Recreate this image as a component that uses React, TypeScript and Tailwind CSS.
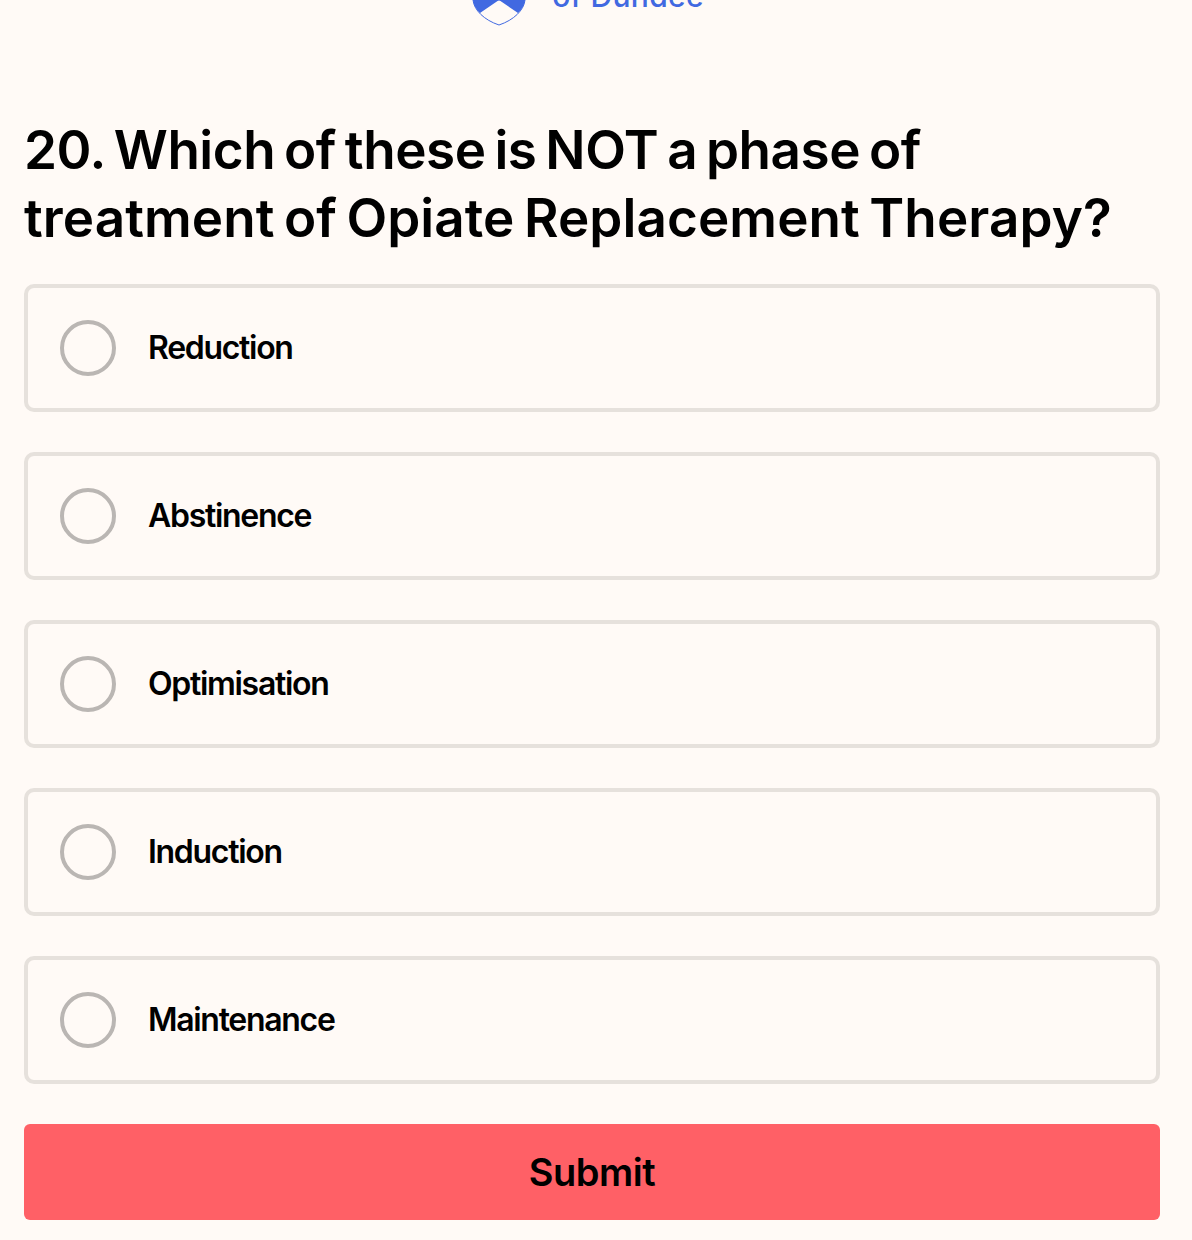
import React from "react";

const options = ["Reduction", "Abstinence", "Optimisation", "Induction", "Maintenance"];

const Shield = () => (
  <svg width="54" height="26" viewBox="0 0 54 26" fill="none">
    <path d="M1 0 C2 10 12 20 27 25 C42 20 52 10 53 0 Z" fill="#fffaf6" stroke="#4169e1" strokeWidth="1" />
    <path d="M1 0 C1.5 5 4 9 8 13 L27 0 L46 13 C50 9 52.5 5 53 0 Z" fill="#4169e1" />
  </svg>
);

const App: React.FC = () => {
  return (
    <div className="min-h-[1240px] bg-[#fffaf6] text-black font-['Inter',sans-serif]">
      <div className="h-[26px] overflow-hidden flex items-end justify-center">
        <div className="flex items-end gap-[26px] pr-[16px]">
          <Shield />
          <div className="text-[30px] leading-[40px] mb-[10px] font-medium tracking-[0.3px] text-[#4169e1]">of Dundee</div>
        </div>
      </div>
      <div className="pl-6 pr-8 pt-[90px]">
        <h1 className="text-[53px] leading-[68px] font-semibold [word-spacing:-4px]">
          <span className="tracking-[-0.47px]">20. Which of these is NOT a phase of</span>
          <br />
          <span className="tracking-[0.08px]">treatment of Opiate Replacement Therapy?</span>
        </h1>
        <div className="mt-[32px] flex flex-col gap-10">
          {options.map((o) => (
            <div key={o} className="h-32 border-4 border-[#e6e1dc] rounded-[10px] flex items-center pl-8 gap-8">
              <div className="w-14 h-14 rounded-full border-4 border-[#bab6b3]" />
              <span className="text-[32px] font-semibold tracking-[-1.3px]">{o}</span>
            </div>
          ))}
        </div>
        <button className="mt-10 w-full h-24 bg-[#ff6066] rounded-md text-[38px] font-semibold tracking-[-0.5px]">
          Submit
        </button>
      </div>
    </div>
  );
};

export default App;
